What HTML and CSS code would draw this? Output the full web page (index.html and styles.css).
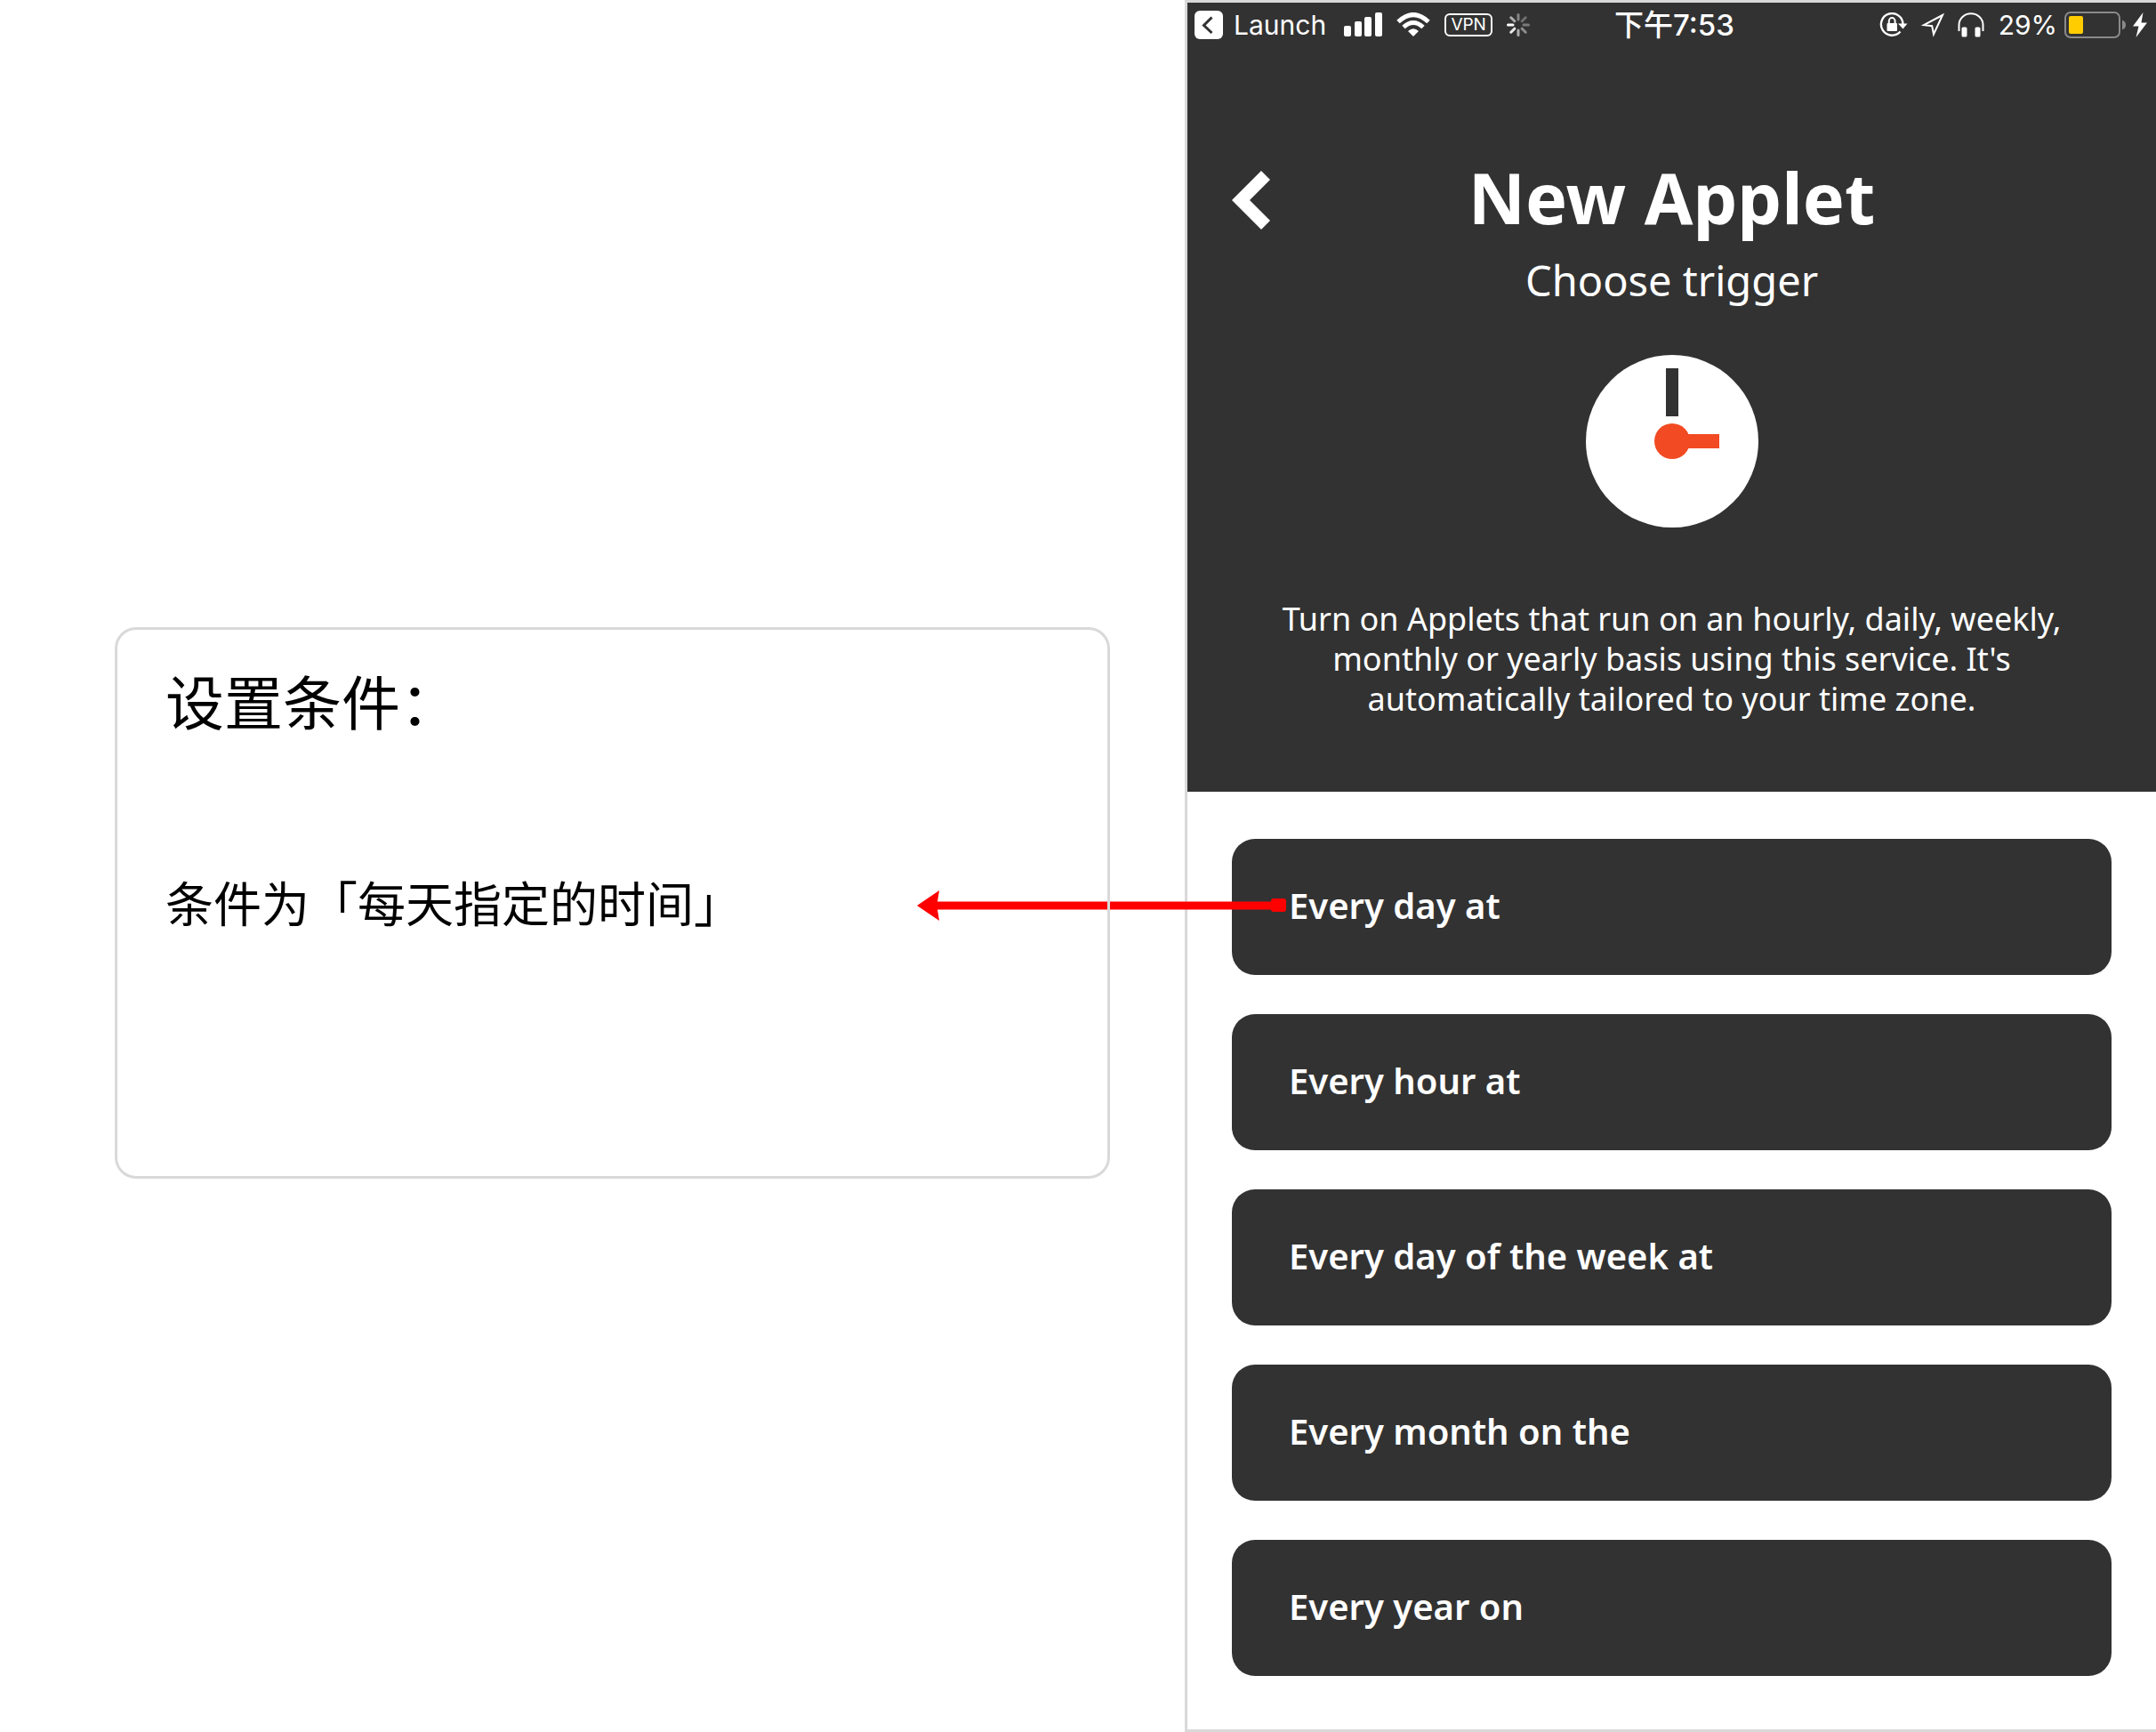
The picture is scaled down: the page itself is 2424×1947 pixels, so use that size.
FILE: index.html
```html
<!DOCTYPE html>
<html lang="zh-CN">
<head>
<meta charset="utf-8">
<meta name="viewport" content="width=device-width, initial-scale=1">
<title>New Applet</title>
<link rel="stylesheet" href="styles.css">
</head>
<body>
<div class="stage">
  <section class="notes">
    <article class="note">
      <h2 class="note-title">设置条件：</h2>
      <p class="note-text">条件为「每天指定的时间」</p>
    </article>
  </section>

  <main class="phone" lang="en">
    <header class="hero">
      <div class="status">
        <div class="status-side">
          <a class="launch" href="#">
            <svg width="32" height="32" viewBox="0 0 32 32" aria-hidden="true"><rect width="32" height="32" rx="6" fill="#fff"/><path d="M19.500 7.500 10.500 16.500 19.500 25" fill="none" stroke="#323232" stroke-width="3"/></svg>
            <span>Launch</span>
          </a>
          <svg class="signal" width="43" height="28" viewBox="0 0 43 28" fill="#fff" aria-hidden="true"><rect y="15" width="8" height="12" rx="2"/><rect x="12" y="10" width="8" height="17" rx="2"/><rect x="23" y="5" width="8" height="22" rx="2"/><rect x="35" width="8" height="27" rx="2"/></svg>
          <svg class="wifi" width="38" height="28" viewBox="0 0 38 28" fill="none" stroke="#fff" stroke-width="5" aria-hidden="true"><path d="M2 10.500Q19-5.500 36 10.500"/><path d="M8 16.500Q19 6.500 30 16.500"/><path d="M13 21Q19 15.500 25 21L19 27Z" fill="#fff" stroke="none"/></svg>
          <span class="vpn">VPN</span>
          <svg class="spinner" width="26" height="26" viewBox="-13 -13 26 26" stroke="#fff" stroke-width="3" stroke-linecap="round" aria-hidden="true"><path d="M0-6V-11.500" opacity=".4"/><path d="M4.200-4.200 8.200-8.200" opacity=".3"/><path d="M6 0H11.500" opacity=".35"/><path d="M4.200 4.200 8.200 8.200" opacity=".45"/><path d="M0 6V11.500" opacity=".6"/><path d="M-4.200 4.200-8.200 8.200" opacity=".9"/><path d="M-6 0H-11.500"/><path d="M-4.200-4.200-8.200-8.200" opacity=".6"/></svg>
        </div>
        <time class="clock-time">下午7:53</time>
        <div class="status-side status-right">
          <svg class="lock" width="32" height="28" viewBox="0 0 32 28" aria-hidden="true"><path d="M23.500 21.500A12.300 12.300 0 1 1 26.500 13" fill="none" stroke="#fff" stroke-width="2.400"/><path d="M21 12.500H31.500L26.500 18.500Z" fill="#fff"/><rect x="8.500" y="12" width="11.500" height="9" rx="1" fill="#fff"/><path d="M10.800 12V9.500a3.400 3.400 0 0 1 6.800 0V12" fill="none" stroke="#fff" stroke-width="2"/></svg>
          <svg class="locate" width="28" height="28" viewBox="0 0 28 28" fill="none" stroke="#fff" stroke-width="2" aria-hidden="true"><path d="M25 3 4 14.200 13.200 15.200 15 24.500Z"/></svg>
          <svg class="phones" width="30" height="28" viewBox="0 0 30 28" aria-hidden="true"><path d="M1.500 21V14a13.500 12.800 0 0 1 27 0V21" fill="none" stroke="#fff" stroke-width="2"/><rect x="4.500" y="16.500" width="6" height="11" rx="1.500" fill="#fff"/><rect x="19.500" y="16.500" width="6" height="11" rx="1.500" fill="#fff"/></svg>
          <span class="percent">29%</span>
          <svg class="battery" width="70" height="30" viewBox="0 0 70 30" aria-hidden="true"><rect x="1" y="1" width="61" height="28" rx="6" fill="none" stroke="#8a8a8a" stroke-width="2"/><rect x="5" y="5" width="16" height="20" rx="2" fill="#fc0"/><path d="M65 9.500Q69 11 69 15T65 20.500Z" fill="#8a8a8a"/></svg>
          <svg class="bolt" width="16" height="30" viewBox="0 0 16 30" fill="#fff" aria-hidden="true"><path d="M11.500 1 0 16.500H6.500L3.500 29 16 12.500H9.500Z"/></svg>
        </div>
      </div>

      <div class="title-bar">
        <button class="back" type="button" aria-label="Back">
          <svg width="43" height="66" viewBox="0 0 43 66" fill="#fff" aria-hidden="true"><path d="M33 0 0 33 33 66 43 56 20 33 43 10Z"/></svg>
        </button>
        <h1 class="title">New Applet</h1>
      </div>
      <p class="subtitle">Choose trigger</p>
      <svg class="dial" width="194" height="194" viewBox="0 0 194 194" aria-hidden="true"><circle cx="97" cy="97" r="97" fill="#fff"/><rect x="90" y="15" width="14" height="54" fill="#323232"/><circle cx="97" cy="97" r="20" fill="#f24a22"/><rect x="97" y="89" width="53" height="16" fill="#f24a22"/></svg>
      <p class="about">Turn on Applets that run on an hourly, daily, weekly, monthly or yearly basis using this service. It's automatically tailored to your time zone.</p>
    </header>

    <ul class="triggers">
      <li class="trigger-item">
        <button class="trigger" type="button">Every day at</button>
        <svg class="pointer" width="416" height="34" viewBox="0 0 416 34" fill="#f00" aria-hidden="true"><path d="M0 17 25 0 23 12.500H399V21.500H23L25 34Z"/><rect x="398" y="9" width="17" height="15" rx="3"/></svg>
      </li>
      <li class="trigger-item"><button class="trigger" type="button">Every hour at</button></li>
      <li class="trigger-item"><button class="trigger" type="button">Every day of the week at</button></li>
      <li class="trigger-item"><button class="trigger" type="button">Every month on the</button></li>
      <li class="trigger-item"><button class="trigger" type="button">Every year on</button></li>
    </ul>
  </main>
</div>
</body>
</html>
```
FILE: styles.css
```css
* {
  box-sizing: border-box;
}

body {
  margin: 0;
  background: #fff;
  color: #000;
  font-family: "Noto Sans", "Noto Sans CJK SC", sans-serif;
}

h1,
h2,
p,
ul {
  margin: 0;
  padding: 0;
}

button {
  border: 0;
  padding: 0;
  background: none;
  color: inherit;
  font: inherit;
  cursor: pointer;
}

svg {
  display: block;
  flex: none;
}

.stage {
  display: grid;
  grid-template-columns: 1332fr 1092fr;
}

/* Explanatory card on the left */
.notes {
  display: flex;
  flex-direction: column;
  justify-content: center;
  padding: 82px 84px 0 129px;
}

.note {
  position: relative;
  z-index: 2;
  min-height: 620px;
  padding: 30px 54px;
  border: 3px solid #d9d9d9;
  border-radius: 24px;
  font-family: "Noto Sans CJK SC", sans-serif;
}

.note-title {
  font-size: 66px;
  font-weight: 400;
  line-height: 96px;
}

.note-text {
  margin-top: 140px;
  font-size: 54px;
  line-height: 80px;
}

/* Phone screen */
.phone {
  border: 3px solid #d9d9d9;
  border-right: 0;
}

.hero {
  display: flex;
  flex-direction: column;
  align-items: center;
  padding-bottom: 82px;
  background: #323232;
  color: #fff;
  text-align: center;
}

.status {
  display: grid;
  grid-template-columns: 1fr auto 1fr;
  align-items: center;
  align-self: stretch;
  height: 50px;
  padding: 0 10px 0 8px;
  font-family: "Inter", "Noto Sans CJK SC", sans-serif;
  font-size: 30px;
  line-height: 40px;
}

.status-side,
.launch {
  display: flex;
  align-items: center;
}

.status-right {
  justify-content: flex-end;
}

.launch {
  gap: 12px;
  color: inherit;
  text-decoration: none;
}

.signal {
  margin-left: 20px;
}

.wifi {
  margin-left: 16px;
}

.vpn {
  margin-left: 16px;
  width: 54px;
  border: 2px solid #fff;
  border-radius: 6px;
  font-size: 19px;
  line-height: 22px;
}

.spinner {
  margin-left: 16px;
}

.clock-time {
  margin-left: 8px;
  font-size: 33px;
  font-weight: 500;
}

.locate {
  margin-left: 14px;
}

.phones {
  margin-left: 14px;
}

.percent {
  margin-left: 16px;
}

.battery {
  margin-left: 8px;
}

.bolt {
  margin-left: 7px;
}

.title-bar {
  display: grid;
  grid-template-columns: 1fr auto 1fr;
  align-items: center;
  align-self: stretch;
  margin-top: 118px;
  padding: 0 50px;
}

.back {
  justify-self: start;
}

.title {
  padding-bottom: 6px;
  font-size: 79px;
  font-weight: 700;
  line-height: 102px;
}

.subtitle {
  margin-top: 4px;
  font-size: 47px;
  line-height: 64px;
}

.dial {
  margin-top: 52px;
}

.about {
  max-width: 920px;
  margin-top: 80px;
  font-size: 36px;
  line-height: 45px;
}

.triggers {
  display: grid;
  gap: 44px;
  padding: 53px 50px 60px;
  list-style: none;
}

.trigger-item {
  position: relative;
}

.trigger {
  display: block;
  width: 100%;
  height: 153px;
  padding: 0 64px 4px;
  border-radius: 26px;
  background: #323232;
  color: #fff;
  font-size: 40px;
  font-weight: 600;
  text-align: left;
}

/* Arrow from the first trigger to the note beside it */
.pointer {
  position: absolute;
  top: 58px;
  left: -354px;
  z-index: 1;
}
```
